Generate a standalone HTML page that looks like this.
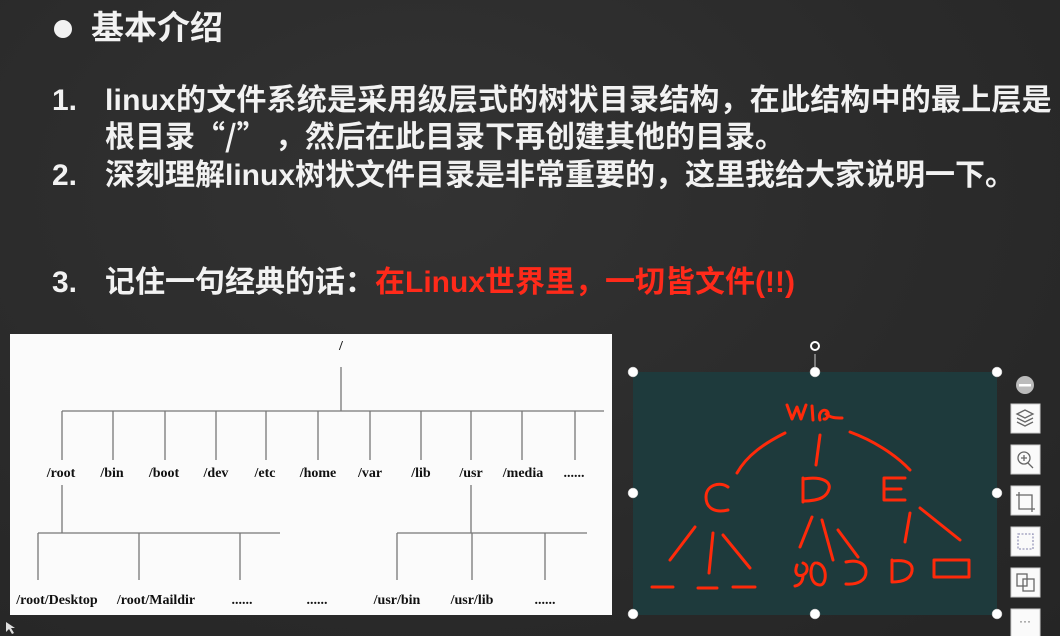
<!DOCTYPE html>
<html><head><meta charset="utf-8"><style>
body{margin:0;width:1060px;height:636px;overflow:hidden;background:#2b2b2b;font-family:"Liberation Sans","Noto Sans CJK SC",sans-serif;}
.t{position:absolute;color:#f2f2f2;font-weight:bold;white-space:nowrap;line-height:1;}
.red{color:#ff2a1a}
.cj{font-family:"Noto Sans CJK SC",sans-serif}
</style></head><body>
<div style="position:absolute;inset:0;background:radial-gradient(ellipse at 40% 30%,#333 0%,#2a2a2a 60%,#252525 100%)"></div>
<div style="position:absolute;left:54px;top:20px;width:18px;height:18px;border-radius:50%;background:#f2f2f2"></div>
<div class="t" style="left:91px;top:11px;font-size:33px">基本介绍</div>
<div class="t" style="left:52px;top:86px;font-size:30px">1.</div>
<div class="t" style="left:105px;top:86px;font-size:30px;letter-spacing:0.2px">linux的文件系统是采用级层式的树状目录结构，在此结构中的最上层是</div>
<div class="t" style="left:105px;top:119px;font-size:30px">根目录<span class="cj">“/”</span>&nbsp;，然后在此目录下再创建其他的目录。</div>
<div class="t" style="left:52px;top:161px;font-size:30px">2.</div>
<div class="t" style="left:105px;top:161px;font-size:30px">深刻理解linux树状文件目录是非常重要的，这里我给大家说明一下。</div>
<div class="t" style="left:52px;top:268px;font-size:30px">3.</div>
<div class="t" style="left:105px;top:268px;font-size:30px">记住一句经典的话：<span class="red">在Linux世界里，一切皆文件(!!)</span></div>

<svg style="position:absolute;left:0;top:0" width="1060" height="636">
<rect x="10" y="334" width="602" height="281" fill="#fbfbfb"/>
<g stroke="#777" stroke-width="1.3" fill="none">
<path d="M341 367V411M62 411H604"/>
<path d="M62 411V460M113 411V460M165 411V460M216 411V460M266 411V460M318 411V460M370 411V460M421 411V460M471 411V460M522 411V460M575 411V460"/>
<path d="M62 485V533M38 533H280M38 533V580M139 533V580M240 533V580"/>
<path d="M471 485V533M397 533H587M397 533V580M472 533V580M545 533V580"/>
</g>
<g font-family="Liberation Serif,serif" font-weight="bold" font-size="14" fill="#111" text-anchor="middle">
<text x="341" y="350">/</text>
<text x="61" y="477">/root</text><text x="112" y="477">/bin</text><text x="164" y="477">/boot</text><text x="216" y="477">/dev</text><text x="265" y="477">/etc</text><text x="318" y="477">/home</text><text x="370" y="477">/var</text><text x="421" y="477">/lib</text><text x="471" y="477">/usr</text><text x="523" y="477">/media</text><text x="574" y="477">......</text>
<text x="57" y="604">/root/Desktop</text><text x="156" y="604">/root/Maildir</text><text x="242" y="604">......</text><text x="317" y="604">......</text><text x="397" y="604">/usr/bin</text><text x="472" y="604">/usr/lib</text><text x="545" y="604">......</text>
</g>
<path d="M6 622l0 10 3-3 3 5 2-1-3-5 4 0z" fill="#ddd"/>

<rect x="633" y="372" width="364" height="243" fill="#1e3a3c"/>
<g stroke="#ff2a0a" stroke-width="3" fill="none" stroke-linecap="round" stroke-linejoin="round">
<path d="M787 405l5 14 5-12 4 12 5-14M812 406l1 14M820 420c-2-6 2-12 7-9 3 3 0 9-3 8M826 414c5 4 10 4 16 4"/>
<path d="M785 433c-20 10-38 22-48 40M820 435l-4 30M850 432c22 8 45 22 60 38"/>
<path d="M728 487c-8-6-22-2-22 10s10 16 22 13"/>
<path d="M803 478v24M803 479c20-3 28 3 26 10s-8 12-26 12"/>
<path d="M905 478h-21v22h21M884 489h17"/>
<path d="M695 527l-25 33M713 533l-4 40M723 535l27 33M652 587h21M698 588h19M733 587h22"/>
<path d="M812 517l-12 30M822 520l11 40M838 530l20 27"/>
<path d="M797 565c-3 8 0 12 6 10 5-2 6-10 0-12M803 575c0 5-2 10-8 11M815 563c-6 2-6 22 5 22 7 0 8-20-3-22M846 562c12-3 20 2 20 10s-8 13-20 12"/>
<path d="M910 513l-5 29M920 508l40 32"/>
<path d="M892 560v22M892 561c17-2 21 4 20 10s-6 11-20 11"/>
<path d="M934 560h35v17h-35zM934 560v17"/>
</g>
<g fill="#fff" stroke="#aaa" stroke-width="0.5">
<circle cx="633" cy="372" r="5"/><circle cx="815" cy="372" r="5"/><circle cx="997" cy="372" r="5"/>
<circle cx="633" cy="493" r="5"/><circle cx="997" cy="493" r="5"/>
<circle cx="633" cy="614" r="5"/><circle cx="815" cy="614" r="5"/><circle cx="997" cy="614" r="5"/>
</g>
<path d="M815 354V367" stroke="#ccc" stroke-width="1"/>
<circle cx="815" cy="346" r="4" fill="none" stroke="#fff" stroke-width="2"/>
<circle cx="1025" cy="385" r="9" fill="#bbb"/><rect x="1019" y="384" width="12" height="2.5" fill="#fff"/>
<g fill="#fafafa" stroke="#ccc"><rect x="1011" y="404" width="29" height="29"/><rect x="1011" y="445" width="29" height="29"/><rect x="1011" y="486" width="29" height="29"/><rect x="1011" y="527" width="29" height="29"/><rect x="1011" y="568" width="29" height="29"/><rect x="1011" y="609" width="29" height="29"/></g>
<g fill="none" stroke="#666" stroke-width="1.3">
<path d="M1017 414l8-4 8 4-8 4z M1017 418l8 4 8-4M1017 422l8 4 8-4"/>
<circle cx="1024" cy="458" r="6"/><path d="M1028 463l5 5M1024 455v6M1021 458h6"/>
<path d="M1019 492v17h16M1016 495h16v17"/>
<rect x="1018" y="534" width="15" height="15" stroke="#99b" stroke-dasharray="2 1.5"/>
<rect x="1017" y="574" width="10" height="12"/><rect x="1023" y="579" width="11" height="12"/>
</g>
<text x="1025" y="625" font-size="12" fill="#555" text-anchor="middle">···</text>
</svg>
</body></html>
